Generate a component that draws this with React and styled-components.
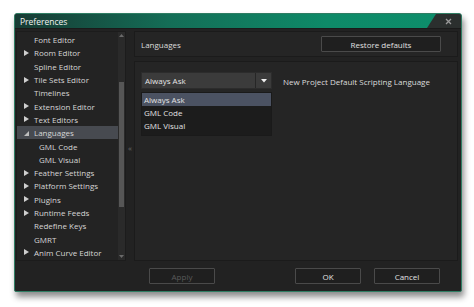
import styled, { createGlobalStyle } from "styled-components";

const Global = createGlobalStyle`
  html, body {
    margin: 0;
    padding: 0;
    background: #ffffff;
  }
  body {
    font-family: "Open Sans", "Noto Sans", sans-serif;
    font-size: 8px;
  }
`;

const Page = styled.div`
  width: 474px;
  height: 307px;
  padding: 13px 0 0 14px;
  box-sizing: border-box;
`;

const Window = styled.div`
  width: 448px;
  height: 279px;
  box-sizing: border-box;
  border: 1px solid #2f7d63;
  border-radius: 3px 3px 2px 2px;
  background: #222222;
  box-shadow: 2px 5px 6px rgba(0, 0, 0, 0.45);
  display: flex;
  flex-direction: column;
  overflow: hidden;
`;

const TitleBar = styled.div`
  height: 14px;
  flex: none;
  display: flex;
  align-items: center;
  justify-content: space-between;
  background: linear-gradient(90deg, #173a33 0%, #146e57 35%, #0e8a68 70%, #0d8e6b 100%);
`;

const Title = styled.span`
  color: #f2f2f2;
  font-size: 8.5px;
  padding-left: 5px;
`;

const CloseNotch = styled.div`
  width: 34px;
  height: 100%;
  background: #2b2f2e;
  clip-path: polygon(9px 0, 100% 0, 100% 100%, 0 100%);
  display: flex;
  align-items: center;
  justify-content: center;
  padding-left: 8px;
  box-sizing: border-box;
`;

const Body = styled.div`
  flex: 1;
  display: flex;
  flex-direction: column;
  border-top: 1px solid #1a1a1a;
  padding: 1px 1px 0 1px;
  min-height: 0;
`;

const Main = styled.div`
  flex: 1;
  display: flex;
  min-height: 0;
`;

const Sidebar = styled.div`
  width: 108px;
  display: flex;
  background: #232323;
  border: 1px solid #1c1c1c;
  margin-top: 1px;
`;

const Tree = styled.div`
  flex: 1;
  padding-top: 1px;
  display: flex;
  flex-direction: column;
`;

const TreeRow = styled.div`
  height: 13.3px;
  display: flex;
  align-items: center;
  padding-left: ${(p) => (p.$sub ? 22 : 7)}px;
  color: #d6d6d6;
  background: ${(p) => (p.$active ? "#474a50" : "transparent")};
  white-space: nowrap;
`;

const Arrow = styled.span`
  width: 10px;
  display: inline-flex;
  align-items: center;
  flex: none;
`;

const Scrollbar = styled.div`
  width: 7px;
  background: #2a2a2a;
  display: flex;
  flex-direction: column;
  align-items: center;
  justify-content: space-between;
  padding: 2px 0;
  position: relative;
`;

const Thumb = styled.div`
  position: absolute;
  left: 1px;
  right: 1px;
  top: 50px;
  height: 125px;
  background: #565656;
`;

const Splitter = styled.div`
  width: 8px;
  display: flex;
  align-items: center;
  justify-content: center;
  color: #6a6a6a;
  font-size: 8px;
  padding-top: 4px;
`;

const Right = styled.div`
  flex: 1;
  display: flex;
  flex-direction: column;
  gap: 4px;
  padding-right: 2px;
`;

const HeaderPanel = styled.div`
  height: 26px;
  flex: none;
  box-sizing: border-box;
  border: 1px solid #1b1b1b;
  background: #252525;
  display: flex;
  align-items: center;
  justify-content: space-between;
  padding: 0 16px 0 6px;
  margin-top: 1px;
  color: #dcdcdc;
`;

const Button = styled.div`
  width: ${(p) => p.$w || 66}px;
  height: 16px;
  box-sizing: border-box;
  border: 1px solid #4a4a4a;
  background: #1f1f1f;
  color: ${(p) => (p.$disabled ? "#5a5a5a" : "#e0e0e0")};
  display: flex;
  align-items: center;
  justify-content: center;
  border-radius: 1px;
`;

const ContentPanel = styled.div`
  flex: 1;
  box-sizing: border-box;
  border: 1px solid #1b1b1b;
  background: #252525;
  padding: 10px 6px;
  display: flex;
  gap: 11px;
  align-items: flex-start;
`;

const SelectCol = styled.div`
  width: 131px;
  display: flex;
  flex-direction: column;
  gap: 3px;
`;

const Select = styled.div`
  height: 15px;
  display: flex;
  background: #3b3b3b;
  border: 1px solid #2c2c2c;
  color: #e6e6e6;
`;

const SelectValue = styled.div`
  flex: 1;
  display: flex;
  align-items: center;
  padding-left: 3px;
`;

const SelectButton = styled.div`
  width: 15px;
  border-left: 1px solid #262626;
  display: flex;
  align-items: center;
  justify-content: center;
`;

const ListBox = styled.div`
  background: #1c1c1c;
  display: flex;
  flex-direction: column;
  padding-bottom: 3px;
  border: 1px solid #1a1a1a;
`;

const Option = styled.div`
  height: 13px;
  display: flex;
  align-items: center;
  padding-left: 2px;
  color: #e2e2e2;
  background: ${(p) => (p.$selected ? "#4b5262" : "transparent")};
`;

const Label = styled.div`
  color: #dcdcdc;
  padding-top: 4px;
  white-space: nowrap;
`;

const Footer = styled.div`
  height: 30px;
  flex: none;
  display: flex;
  align-items: center;
  gap: 13px;
  padding: 0 20px 0 133px;
`;

const Spacer = styled.div`
  flex: 1;
`;

const Tri = ({ dir = "right", color = "#cfcfcf" }) => (
  <svg width="5" height="6" viewBox="0 0 5 6">
    {dir === "right" && <polygon points="0,0 5,3 0,6" fill={color} />}
    {dir === "down" && <polygon points="5,1 5,6 0,6" fill={color} />}
  </svg>
);

const items = [
  { label: "Font Editor" },
  { label: "Room Editor", arrow: true },
  { label: "Spline Editor" },
  { label: "Tile Sets Editor", arrow: true },
  { label: "Timelines" },
  { label: "Extension Editor", arrow: true },
  { label: "Text Editors", arrow: true },
  { label: "Languages", open: true, active: true },
  { label: "GML Code", sub: true },
  { label: "GML Visual", sub: true },
  { label: "Feather Settings", arrow: true },
  { label: "Platform Settings", arrow: true },
  { label: "Plugins", arrow: true },
  { label: "Runtime Feeds", arrow: true },
  { label: "Redefine Keys" },
  { label: "GMRT" },
  { label: "Anim Curve Editor", arrow: true },
];

export default function App() {
  return (
    <Page>
      <Global />
      <Window>
        <TitleBar>
          <Title>Preferences</Title>
          <CloseNotch>
            <svg width="7" height="7" viewBox="0 0 7 7">
              <path d="M1 1 L6 6 M6 1 L1 6" stroke="#9a9a9a" strokeWidth="1.3" />
            </svg>
          </CloseNotch>
        </TitleBar>
        <Body>
          <Main>
            <Sidebar>
              <Tree>
                {items.map((it) => (
                  <TreeRow key={it.label} $sub={it.sub} $active={it.active}>
                    {!it.sub && (
                      <Arrow>
                        {it.arrow && <Tri />}
                        {it.open && <Tri dir="down" color="#bdbdbd" />}
                      </Arrow>
                    )}
                    {it.label}
                  </TreeRow>
                ))}
              </Tree>
              <Scrollbar>
                <svg width="5" height="3" viewBox="0 0 5 3">
                  <polygon points="0,3 5,3 2.5,0" fill="#6a6a6a" />
                </svg>
                <Thumb />
                <svg width="5" height="3" viewBox="0 0 5 3">
                  <polygon points="0,0 5,0 2.5,3" fill="#6a6a6a" />
                </svg>
              </Scrollbar>
            </Sidebar>
            <Splitter>«</Splitter>
            <Right>
              <HeaderPanel>
                <span>Languages</span>
                <Button $w={120}>Restore defaults</Button>
              </HeaderPanel>
              <ContentPanel>
                <SelectCol>
                  <Select>
                    <SelectValue>Always Ask</SelectValue>
                    <SelectButton>
                      <svg width="6" height="4" viewBox="0 0 6 4">
                        <polygon points="0,0 6,0 3,3.5" fill="#f0f0f0" />
                      </svg>
                    </SelectButton>
                  </Select>
                  <ListBox>
                    <Option $selected>Always Ask</Option>
                    <Option>GML Code</Option>
                    <Option>GML Visual</Option>
                  </ListBox>
                </SelectCol>
                <Label>New Project Default Scripting Language</Label>
              </ContentPanel>
            </Right>
          </Main>
          <Footer>
            <Button $disabled>Apply</Button>
            <Spacer />
            <Button>OK</Button>
            <Button>Cancel</Button>
          </Footer>
        </Body>
      </Window>
    </Page>
  );
}
